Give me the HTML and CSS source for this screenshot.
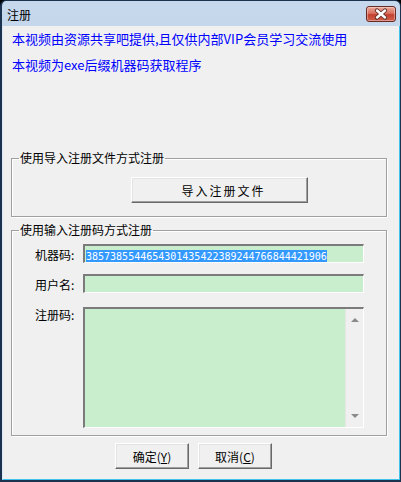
FILE: index.html
```html
<!DOCTYPE html>
<html>
<head>
<meta charset="utf-8">
<title>注册</title>
<link rel="stylesheet" href="styles.css">
</head>
<body>
<div class="window">
  <div class="titlebar">
    <span class="title">注册</span>
    <span class="close-btn">
      <svg width="28" height="14" viewBox="0 0 28 14">
        <path d="M10 3.5 L18 10.5 M18 3.5 L10 10.5" stroke="#5b2b27" stroke-width="4.2" stroke-linecap="round"/>
        <path d="M10 3.5 L18 10.5 M18 3.5 L10 10.5" stroke="#ffffff" stroke-width="2.4" stroke-linecap="round"/>
      </svg>
    </span>
  </div>

  <div class="client">
    <div class="notice">
      <p>本视频由资源共享吧提供,且仅供内部VIP会员学习交流使用</p>
      <p>本视频为exe后缀机器码获取程序</p>
    </div>

    <fieldset class="group group-file">
      <legend>使用导入注册文件方式注册</legend>
      <div class="group-body">
        <button class="btn btn-import">导入注册文件</button>
      </div>
    </fieldset>

    <fieldset class="group group-code">
      <legend>使用输入注册码方式注册</legend>
      <div class="form-grid">
        <label class="form-label">机器码:</label>
        <div class="field"><span class="selected">3857385544654301435422389244766844421906</span></div>

        <label class="form-label">用户名:</label>
        <div class="field"></div>

        <label class="form-label">注册码:</label>
        <div class="field memo">
          <div class="memo-text"></div>
          <div class="scrollbar">
            <span class="arrow arrow-up"></span>
            <span class="arrow arrow-down"></span>
          </div>
        </div>
      </div>
    </fieldset>

    <div class="actions">
      <button class="btn btn-small">确定(<u>Y</u>)</button>
      <button class="btn btn-small">取消(<u>C</u>)</button>
    </div>
  </div>
</div>
</body>
</html>
```

FILE: styles.css
```css
body {
  margin: 0;
  background: #000;
  font-family: "Noto Sans CJK SC", "Liberation Sans", sans-serif;
  font-size: 12px;
  color: #000;
}

.window {
  width: 401px;
  height: 482px;
  box-sizing: border-box;
  display: flex;
  flex-direction: column;
  border: 1px solid #1c3350;
  border-left-width: 2px;
  border-bottom-width: 2px;
  border-radius: 6px 6px 0 0;
  background: linear-gradient(to bottom, #c6d8ec, #a8c3e1);
}

/* title bar */
.titlebar {
  height: 25px;
  display: flex;
  align-items: center;
  justify-content: space-between;
  padding: 0 4px 0 5px;
}
.title {
  font-size: 12px;
  line-height: 14px;
  margin-top: 2px;
}
.close-btn {
  width: 30px;
  height: 16px;
  box-sizing: border-box;
  margin-top: 1px;
  display: flex;
  align-items: center;
  justify-content: center;
  border: 1px solid #6a2a24;
  border-radius: 3px;
  background: linear-gradient(to bottom, #eba99a 0%, #d9705f 45%, #c4402f 55%, #d0614c 100%);
  box-shadow: inset 0 0 0 1px rgba(255, 255, 255, .35);
}

/* client area */
.client {
  flex: 1;
  background: #f0f0f0;
  border-left: 1px solid #dbe8f5;
  border-right: 1px solid #3ec3ea;
  border-bottom: 1px solid #3ec3ea;
}

.notice {
  padding: 0 9px;
}
.notice p {
  margin: 0;
  color: #0000ff;
  font-size: 13px;
  line-height: 26px;
}

/* group boxes */
.group {
  width: 376px;
  box-sizing: border-box;
  margin: 0 0 0 8px;
  padding: 0;
  border: 1px solid #a0a0a0;
  box-shadow: inset 1px 1px 0 #fff, 1px 1px 0 #fff;
}
.group legend {
  margin-left: 7px;
  padding: 0 1px;
  font-size: 12px;
  line-height: 14px;
}
.group-file {
  margin-top: 73px;
}
.group-body {
  padding: 12px 0 13px 119px;
}
.group-code {
  margin-top: 6px;
}

/* buttons */
.btn {
  display: block;
  height: 26px;
  padding: 0;
  box-sizing: border-box;
  font-family: "Noto Sans CJK SC", "Liberation Sans", sans-serif;
  font-size: 12px;
  color: #000;
  background: #f0f0f0;
  border: 1px solid;
  border-color: #fff #696969 #696969 #fff;
  box-shadow: inset -1px -1px 0 #a0a0a0, inset 1px 1px 0 #e3e3e3;
}
.btn-import {
  width: 177px;
  letter-spacing: 2px;
  text-indent: 8px;
}
.btn-small {
  width: 74px;
}
.btn u {
  text-underline-offset: 1px;
}

/* form */
.form-grid {
  display: grid;
  grid-template-columns: 48px 281px;
  row-gap: 10px;
  padding: 7px 0 7px 23px;
}
.form-label {
  line-height: 19px;
  padding-top: 1px;
}
.field {
  height: 19px;
  box-sizing: border-box;
  background: #c8eecd;
  border-style: solid;
  border-width: 2px 1px 1px 2px;
  border-color: #7b7b7b #fff #fff #7b7b7b;
  padding-left: 1px;
  overflow: hidden;
}
.selected {
  display: inline-block;
  font-family: "DejaVu Sans Mono", monospace;
  font-size: 10px;
  line-height: 14px;
  margin-top: 1px;
  color: #fff;
  background: #3399ff;
}
.memo {
  height: 121px;
  margin-top: 3px;
  padding-left: 0;
  display: flex;
}
.memo-text {
  flex: 1;
}
.scrollbar {
  width: 17px;
  background: #f0f0f0;
  border-left: 1px solid #e6e6e6;
  display: flex;
  flex-direction: column;
  justify-content: space-between;
  align-items: center;
  padding: 9px 0 9px;
}
.arrow {
  width: 0;
  height: 0;
  border-left: 4px solid transparent;
  border-right: 4px solid transparent;
}
.arrow-up {
  border-bottom: 4px solid #8a8a8a;
}
.arrow-down {
  border-top: 4px solid #8a8a8a;
}

/* bottom buttons */
.actions {
  display: flex;
  gap: 9px;
  margin-top: 7px;
  padding-left: 112px;
}
```
